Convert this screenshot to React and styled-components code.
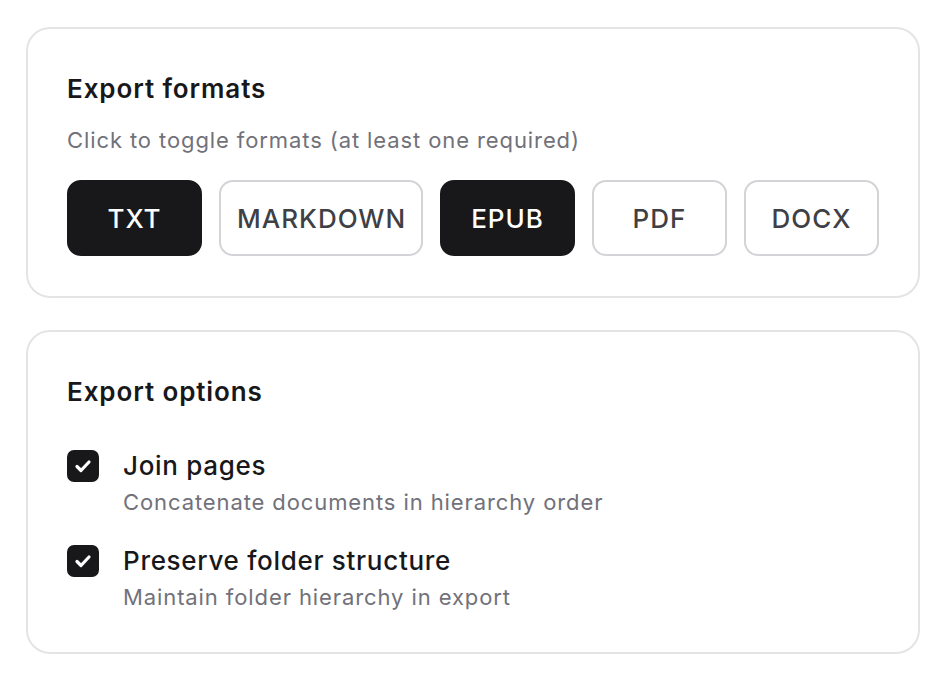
import React, { useState } from "react";
import styled, { createGlobalStyle } from "styled-components";

const GlobalStyle = createGlobalStyle`
  body {
    margin: 0;
    background: #ffffff;
    font-family: Inter, "Noto Sans", sans-serif;
    color: #18181b;
  }
`;

const FORMATS = ["TXT", "MARKDOWN", "EPUB", "PDF", "DOCX"];

const OPTIONS = [
  {
    id: "join",
    label: "Join pages",
    description: "Concatenate documents in hierarchy order",
  },
  {
    id: "folders",
    label: "Preserve folder structure",
    description: "Maintain folder hierarchy in export",
  },
];

export default function App() {
  const [selected, setSelected] = useState(["TXT", "EPUB"]);
  const [options, setOptions] = useState({ join: true, folders: true });

  const toggleFormat = (f) => {
    setSelected((cur) => {
      if (cur.includes(f)) {
        return cur.length > 1 ? cur.filter((x) => x !== f) : cur;
      }
      return [...cur, f];
    });
  };

  return (
    <>
      <GlobalStyle />
      <Page>
        <Card>
          <Title>Export formats</Title>
          <Hint>Click to toggle formats (at least one required)</Hint>
          <Formats>
            {FORMATS.map((f) => (
              <FormatButton
                key={f}
                $active={selected.includes(f)}
                onClick={() => toggleFormat(f)}
              >
                {f}
              </FormatButton>
            ))}
          </Formats>
        </Card>

        <Card>
          <Title>Export options</Title>
          <OptionList>
            {OPTIONS.map((o) => (
              <Option key={o.id}>
                <Checkbox
                  $checked={options[o.id]}
                  onClick={() =>
                    setOptions((cur) => ({ ...cur, [o.id]: !cur[o.id] }))
                  }
                >
                  {options[o.id] && (
                    <svg width="22" height="22" viewBox="0 0 22 22" fill="none">
                      <path
                        d="M5 11.5l4 4L17 7"
                        stroke="#fff"
                        strokeWidth="3.2"
                        strokeLinecap="round"
                        strokeLinejoin="round"
                      />
                    </svg>
                  )}
                </Checkbox>
                <OptionText>
                  <OptionLabel>{o.label}</OptionLabel>
                  <OptionDesc>{o.description}</OptionDesc>
                </OptionText>
              </Option>
            ))}
          </OptionList>
        </Card>
      </Page>
    </>
  );
}

const Page = styled.div`
  display: flex;
  flex-direction: column;
  gap: 32px;
  padding: 27px 32px 22px 26px;
`;

const Card = styled.div`
  border: 2px solid #e4e4e7;
  border-radius: 24px;
  padding: 44px 39px 40px;
  display: flex;
  flex-direction: column;
`;

const Title = styled.div`
  font-size: 26px;
  line-height: 32px;
  font-weight: 600;
  letter-spacing: 0.9px;
  color: #18181b;
`;

const Hint = styled.div`
  margin-top: 20px;
  font-size: 22px;
  line-height: 30px;
  letter-spacing: 0.9px;
  color: #71717a;
`;

const Formats = styled.div`
  display: flex;
  gap: 17px;
  margin-top: 25px;
`;

const FormatButton = styled.button`
  height: 76px;
  padding: 0 16px;
  min-width: 135px;
  border-radius: 14px;
  border: 2px solid ${(p) => (p.$active ? "#18181b" : "#d4d4d8")};
  background: ${(p) => (p.$active ? "#18181b" : "#ffffff")};
  color: ${(p) => (p.$active ? "#ffffff" : "#3f3f46")};
  font-family: Inter, "Noto Sans", sans-serif;
  font-size: 26px;
  font-weight: 500;
  letter-spacing: 1px;
  cursor: pointer;
`;

const OptionList = styled.div`
  display: flex;
  flex-direction: column;
  gap: 28px;
  margin-top: 42px;
`;

const Option = styled.div`
  display: flex;
  align-items: flex-start;
  gap: 24px;
`;

const Checkbox = styled.div`
  width: 32px;
  height: 32px;
  flex: none;
  border-radius: 7px;
  background: ${(p) => (p.$checked ? "#18181b" : "#ffffff")};
  border: 2px solid #18181b;
  box-sizing: border-box;
  display: flex;
  align-items: center;
  justify-content: center;
  cursor: pointer;
`;

const OptionText = styled.div`
  display: flex;
  flex-direction: column;
  gap: 5px;
`;

const OptionLabel = styled.div`
  font-size: 26px;
  line-height: 32px;
  font-weight: 500;
  letter-spacing: 0.7px;
  color: #18181b;
`;

const OptionDesc = styled.div`
  font-size: 22px;
  line-height: 30px;
  letter-spacing: 0.9px;
  color: #71717a;
`;
